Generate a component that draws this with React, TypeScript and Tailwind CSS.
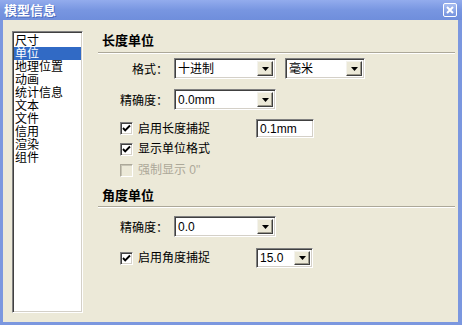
import type { ReactNode } from "react";

const sunken =
  "border border-t-[#808080] border-l-[#808080] border-b-white border-r-white shadow-[inset_1px_1px_0_#404040,inset_-1px_-1px_0_#d4d0c8]";

const cjk = "font-['Noto_Sans_CJK_SC',sans-serif]";

function DropButton() {
  return (
    <div className="w-[16px] h-full flex items-center justify-center bg-[#ece9d8] border border-t-[#f4f3ee] border-l-[#f4f3ee] border-r-[#404040] border-b-[#404040] shadow-[inset_-1px_-1px_0_#9d9a8c]">
      <svg width="7" height="4" viewBox="0 0 7 4">
        <path d="M0 0 H7 L3.5 4 Z" fill="#000" />
      </svg>
    </div>
  );
}

function Combo({ value, w }: { value: string; w: string }) {
  return (
    <div className={`${w} h-full flex bg-white p-[2px] ${sunken}`}>
      <div className="flex-1 flex items-center pl-[1px] text-[12px] leading-none text-black">
        {value}
      </div>
      <DropButton />
    </div>
  );
}

function Check({ checked = true, disabled = false }: { checked?: boolean; disabled?: boolean }) {
  return (
    <div
      className={
        disabled
          ? "w-[13px] h-[13px] shrink-0 border border-t-[#aca899] border-l-[#aca899] border-b-white border-r-white bg-[#ece9d8] shadow-[inset_1px_1px_0_#c7c4b5]"
          : `w-[13px] h-[13px] shrink-0 bg-white flex items-center justify-center ${sunken}`
      }
    >
      {checked && !disabled && (
        <svg width="9" height="9" viewBox="0 0 9 9">
          <path d="M1 4 L3.2 6.4 L8 1.5" stroke="#000" strokeWidth="1.9" fill="none" />
        </svg>
      )}
    </div>
  );
}

function Heading({ children }: { children: ReactNode }) {
  return (
    <div className="h-[15px] pl-[4px] flex items-center text-[13px] font-bold text-black">
      {children}
    </div>
  );
}

function Etched({ className }: { className: string }) {
  return <div className={`${className} h-[2px] border-t border-t-[#aca899] border-b border-b-white`} />;
}

function Label({ children }: { children: ReactNode }) {
  return (
    <div className={`w-[50px] flex items-center justify-end text-[12px] text-black ${cjk}`}>
      {children}
    </div>
  );
}

export default function App() {
  const items = ["尺寸", "单位", "地理位置", "动画", "统计信息", "文本", "文件", "信用", "渲染", "组件"];

  return (
    <div
      className="w-[462px] h-[325px] flex flex-col bg-[#7b97df] overflow-hidden select-none"
      style={{ fontFamily: '"Liberation Sans", "Noto Sans CJK SC", sans-serif' }}
    >
      {/* title bar */}
      <div className="h-[20px] shrink-0 flex items-center justify-between pl-[4px] pr-[5px] bg-gradient-to-b from-[#93aced] via-[#7896e1] to-[#6f8edc]">
        <span className="text-white font-bold text-[13px] leading-none [text-shadow:1px_1px_0_#4c6bbf]">
          模型信息
        </span>
        <div className="w-[14px] h-[14px] flex items-center justify-center border border-white rounded-[2px] bg-gradient-to-b from-[#a9bdf0] to-[#7593de]">
          <svg width="8" height="8" viewBox="0 0 8 8">
            <path d="M1 1 L7 7 M7 1 L1 7" stroke="#fff" strokeWidth="2" />
          </svg>
        </div>
      </div>

      {/* body */}
      <div className="flex-1 flex ml-[3px] mr-[4px] mb-[3px] bg-[#ece9d8] pt-[11px] pb-[9px] pl-[9px] pr-[3px]">
        {/* list */}
        <div className={`w-[71px] h-full bg-white p-[1px] ${sunken}`}>
          <div className="pt-[1px]">
            {items.map((it) => (
              <div
                key={it}
                className={
                  it === "单位"
                    ? "h-[13px] pl-[1px] flex items-center text-[12px] leading-none bg-[#316ac5] text-white"
                    : "h-[13px] pl-[1px] flex items-center text-[12px] leading-none text-black"
                }
              >
                {it}
              </div>
            ))}
          </div>
        </div>

        {/* settings */}
        <div className="flex-1 ml-[15px] flex flex-col">
          <div className="mt-[2px]">
            <Heading>长度单位</Heading>
          </div>
          <Etched className="mt-[4px]" />

          <div className="mt-[4px] h-[21px] flex pl-[20px]">
            <Label>格式：</Label>
            <div className="ml-[6px] flex gap-[9px]">
              <Combo value="十进制" w="w-[102px]" />
              <Combo value="毫米" w="w-[80px]" />
            </div>
          </div>

          <div className="mt-[10px] h-[21px] flex pl-[20px]">
            <Label>精确度：</Label>
            <div className="ml-[6px] flex">
              <Combo value="0.0mm" w="w-[102px]" />
            </div>
          </div>

          <div className="mt-[9px] h-[19px] flex items-center pl-[22px]">
            <div className="w-[136px] flex items-center gap-[5px]">
              <Check />
              <span className="text-[12px] text-black">启用长度捕捉</span>
            </div>
            <div className={`w-[58px] h-full flex items-center pl-[3px] bg-white text-[12px] text-black ${sunken}`}>
              0.1mm
            </div>
          </div>

          <div className="mt-[4px] h-[14px] flex items-center pl-[22px] gap-[5px]">
            <Check />
            <span className="text-[12px] text-black">显示单位格式</span>
          </div>

          <div className="mt-[7px] h-[14px] flex items-center pl-[22px] gap-[5px]">
            <Check disabled />
            <span className="text-[12px] text-[#aca899]">强制显示 0"</span>
          </div>

          <div className="mt-[11px]">
            <Heading>角度单位</Heading>
          </div>
          <Etched className="mt-[3px]" />

          <div className="mt-[8px] h-[21px] flex pl-[20px]">
            <Label>精确度：</Label>
            <div className="ml-[6px] flex">
              <Combo value="0.0" w="w-[102px]" />
            </div>
          </div>

          <div className="mt-[11px] h-[20px] flex items-center pl-[22px]">
            <div className="w-[136px] flex items-center gap-[5px]">
              <Check />
              <span className="text-[12px] text-black">启用角度捕捉</span>
            </div>
            <Combo value="15.0" w="w-[57px]" />
          </div>
        </div>
      </div>
    </div>
  );
}
